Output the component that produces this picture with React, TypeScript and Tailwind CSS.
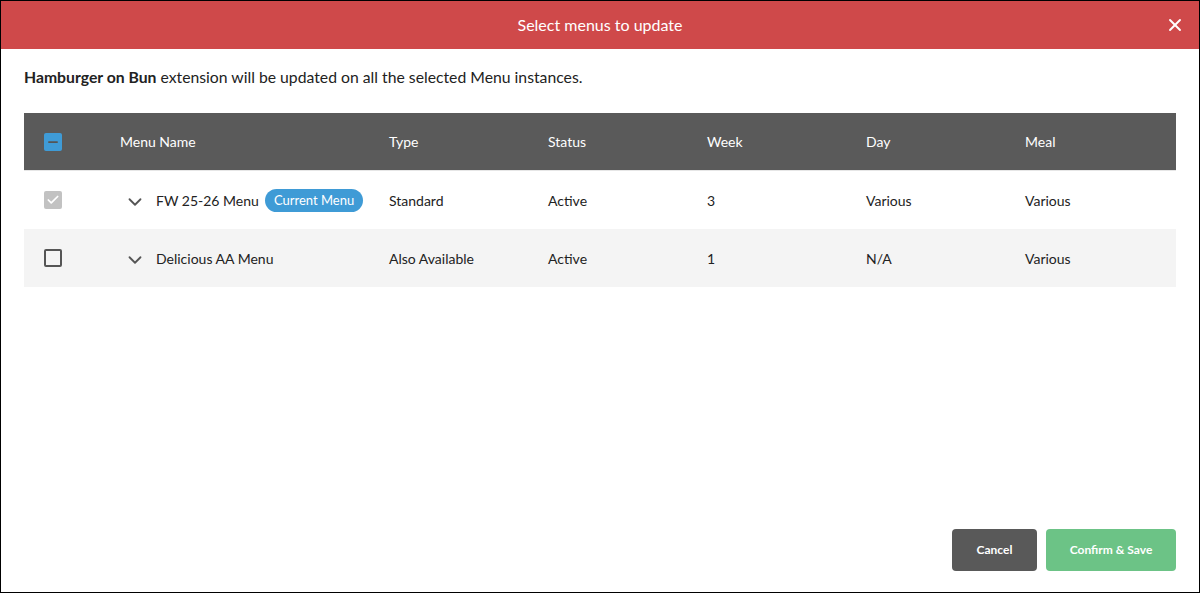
import { X, ChevronDown, Check, Minus } from 'lucide-react'

type Row = {
    name: string
    current?: boolean
    type: string
    status: string
    week: string
    day: string
    meal: string
    checked: boolean
    disabled?: boolean
}

const rows: Row[] = [
    { name: 'FW 25-26 Menu', current: true, type: 'Standard', status: 'Active', week: '3', day: 'Various', meal: 'Various', checked: true, disabled: true },
    { name: 'Delicious AA Menu', type: 'Also Available', status: 'Active', week: '1', day: 'N/A', meal: 'Various', checked: false },
]

const cols = 'grid grid-cols-[96px_269px_159px_159px_159px_159px_151px] items-center'

export default function App() {
    return (
        <div className="w-[1200px] h-[593px] border border-black bg-white flex flex-col font-['Lato','Noto_Sans',sans-serif] text-[#222]">
            <div className="h-[48px] bg-[#cf494a] flex items-center justify-center relative shrink-0">
                <span className="text-white text-[16px]">Select menus to update</span>
                <X className="absolute right-[14px] top-[14px] h-[20px] w-[20px] text-white" strokeWidth={2.25} />
            </div>

            <div className="flex-1 flex flex-col px-[23px]">
                <p className="mt-[16px] text-[15.75px] leading-[24px]">
                    <span className="font-bold">Hamburger on Bun</span> extension will be updated on all the selected Menu instances.
                </p>

                <div className="mt-[24px]">
                    <div className={`${cols} h-[58px] bg-[#5a5a5a] text-white text-[14px] border-b border-[#e6e6e6]`}>
                        <div className="pl-[20px]">
                            <div className="h-[18px] w-[18px] rounded-[2px] bg-[#3f9bd6] flex items-center justify-center">
                                <Minus className="h-[14px] w-[14px] text-[#555]" strokeWidth={3} />
                            </div>
                        </div>
                        <div>Menu Name</div>
                        <div>Type</div>
                        <div>Status</div>
                        <div>Week</div>
                        <div>Day</div>
                        <div>Meal</div>
                    </div>
                    {rows.map((r, i) => (
                        <div key={r.name} className={`${cols} h-[58px] text-[14px] ${i % 2 === 1 ? 'bg-[#f4f4f4]' : 'bg-white'}`}>
                            <div className="pl-[20px]">
                                {r.disabled ? (
                                    <div className="h-[18px] w-[18px] rounded-[2px] bg-[#c2c2c2] flex items-center justify-center">
                                        <Check className="h-[14px] w-[14px] text-white" strokeWidth={3} />
                                    </div>
                                ) : (
                                    <div className="h-[18px] w-[18px] rounded-[2px] border-2 border-[#555]" />
                                )}
                            </div>
                            <div className="flex items-center pl-[4px]">
                                <ChevronDown className="h-[22px] w-[22px] text-[#555] mr-[10px] mt-[3px]" strokeWidth={2} />
                                <span>{r.name}</span>
                                {r.current && (
                                    <span className="ml-[6px] rounded-full bg-[#3f9bd6] text-white text-[13px] px-[9px] h-[23px] leading-[23px]">Current Menu</span>
                                )}
                            </div>
                            <div>{r.type}</div>
                            <div>{r.status}</div>
                            <div>{r.week}</div>
                            <div>{r.day}</div>
                            <div>{r.meal}</div>
                        </div>
                    ))}
                </div>

                <div className="mt-auto mb-[21px] flex justify-end gap-[9px] pr-0">
                    <button className="h-[42px] w-[85px] rounded-[4px] bg-[#595959] text-white text-[12px] font-bold">Cancel</button>
                    <button className="h-[42px] w-[130px] rounded-[4px] bg-[#6cc386] text-white text-[12px] font-bold">Confirm &amp; Save</button>
                </div>
            </div>
        </div>
    )
}
